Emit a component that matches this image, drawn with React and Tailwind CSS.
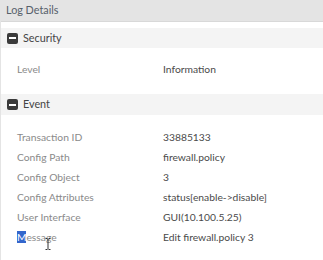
export default function App() {
  const MinusBox = () => (
    <span className="inline-flex w-[11px] h-[11px] bg-[#3b3b3b] rounded-[2px] items-center justify-center mr-[5px]">
      <span className="w-[7px] h-[2px] bg-white" />
    </span>
  );
  const Row = ({ label, value }) => (
    <div className="flex h-[20px] items-center">
      <div className="w-[162px] pl-[16px] text-[#8a8a8a]">{label}</div>
      <div className="text-[#4a4a4a]">{value}</div>
    </div>
  );
  return (
    <div
      className="w-[323px] h-[260px] bg-white text-[10.3px] border-l border-[#e4e4e4] relative overflow-hidden"
      style={{ fontFamily: "Lato, 'Open Sans', sans-serif" }}
    >
      <div className="h-[22px] bg-[#e4e4e4] border-b border-[#d8d8d8] flex items-center pl-[5px] text-[#56606a] text-[10.8px]">
        Log Details
      </div>
      <div className="mt-[6px] h-[20px] bg-[#f4f4f4] flex items-center pl-[6px] text-[#444] text-[10.8px]">
        <MinusBox />
        Security
      </div>
      <div className="mt-[12px]">
        <Row label="Level" value="Information" />
      </div>
      <div className="mt-[14px] h-[21px] bg-[#f4f4f4] flex items-center pl-[6px] text-[#444] text-[10.8px]">
        <MinusBox />
        Event
      </div>
      <div className="mt-[13px] flex flex-col">
        <Row label="Transaction ID" value="33885133" />
        <Row label="Config Path" value="firewall.policy" />
        <Row label="Config Object" value="3" />
        <Row label="Config Attributes" value="status[enable->disable]" />
        <Row label="User Interface" value="GUI(10.100.5.25)" />
        <Row
          label={
            <span>
              <span className="bg-[#3366cc] text-white">M</span>essage
            </span>
          }
          value="Edit firewall.policy 3"
        />
      </div>
      <svg className="absolute left-[44px] top-[238px]" width="6" height="12" viewBox="0 0 6 12">
        <path d="M0.5 0.5h2M3.5 0.5h2M3 1v10M0.5 11.5h2M3.5 11.5h2" stroke="#333" strokeWidth="1" fill="none" />
      </svg>
    </div>
  );
}
